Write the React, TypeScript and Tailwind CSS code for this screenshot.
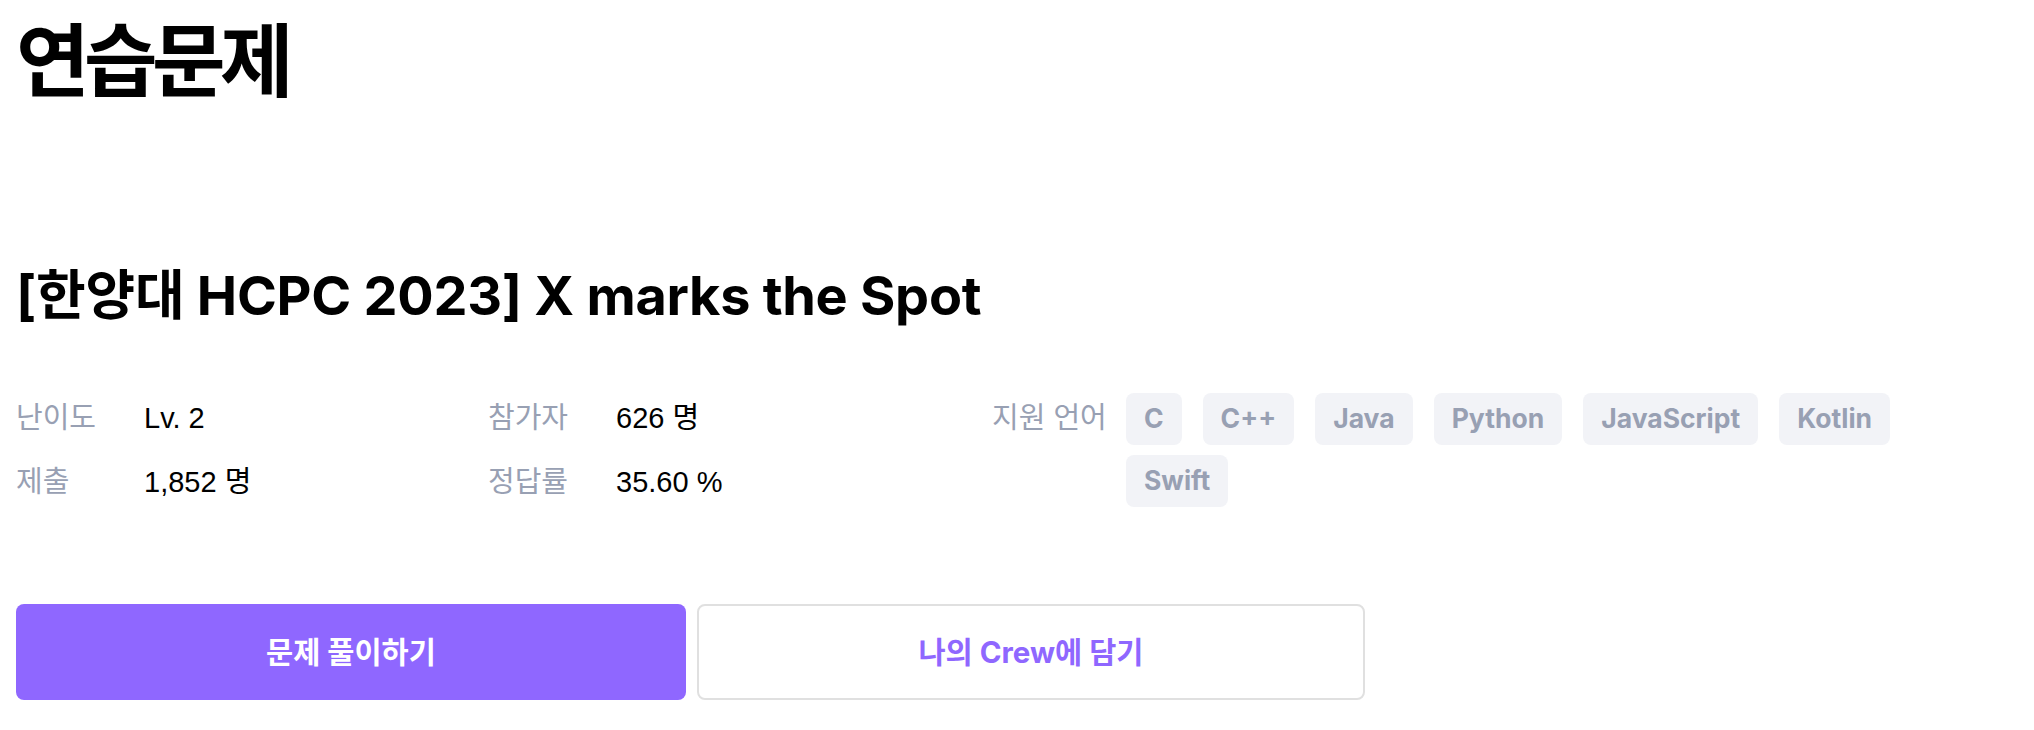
const hangul = "font-['Inter','Noto_Sans_CJK_KR',sans-serif]";

const stats = [
  [
    { label: "난이도", value: "Lv. 2" },
    { label: "제출", value: "1,852 명" },
  ],
  [
    { label: "참가자", value: "626 명" },
    { label: "정답률", value: "35.60 %" },
  ],
];

const languages = ["C", "C++", "Java", "Python", "JavaScript", "Kotlin", "Swift"];

function StatColumn({ rows, width }: { rows: { label: string; value: string }[]; width: string }) {
  return (
    <div className={`flex flex-col gap-[12px] ${width}`}>
      {rows.map((r) => (
        <div key={r.label} className="flex h-[52px] items-center text-[29px]">
          <span className="w-[128px] shrink-0 text-[#98a0b3] font-['Liberation_Sans','Noto_Sans_CJK_KR',sans-serif]">
            {r.label}
          </span>
          <span className="text-black font-['Liberation_Sans','Noto_Sans_CJK_KR',sans-serif]">{r.value}</span>
        </div>
      ))}
    </div>
  );
}

export default function App() {
  return (
    <div className={`min-h-[730px] w-[2034px] bg-white px-4 pt-[21px] ${hangul}`}>
      <h1 className="text-[80px] font-bold leading-none tracking-[-0.07em] text-black">연습문제</h1>

      <h2 className="mt-[165px] text-[54px] font-bold leading-[60px] tracking-[-0.005em] text-black">
        [한양대 HCPC 2023] X marks the Spot
      </h2>

      <div className="mt-[67px] flex">
        <StatColumn rows={stats[0]} width="w-[472px]" />
        <StatColumn rows={stats[1]} width="w-[504px]" />
        <div className="flex">
          <div className="flex h-[52px] w-[134px] shrink-0 items-center text-[29px] text-[#98a0b3] font-['Liberation_Sans','Noto_Sans_CJK_KR',sans-serif]">
            지원 언어
          </div>
          <div className="flex w-[800px] flex-wrap gap-x-[21px] gap-y-[8px]">
            {languages.map((l) => (
              <span
                key={l}
                className="flex h-[52px] items-center rounded-lg bg-[#f2f3f7] px-[18px] text-[26.5px] font-bold text-[#98a0b3]"
              >
                {l}
              </span>
            ))}
          </div>
        </div>
      </div>

      <div className="mt-[95px] flex gap-[11px]">
        <button className="h-[96px] w-[670px] rounded-lg bg-[#8f67ff] text-[29.5px] font-bold text-white">
          문제 풀이하기
        </button>
        <button className="h-[96px] w-[668px] rounded-lg border-2 border-[#e0e0e0] bg-white text-[29.5px] font-bold text-[#8f67ff]">
          나의 Crew에 담기
        </button>
      </div>
    </div>
  );
}
